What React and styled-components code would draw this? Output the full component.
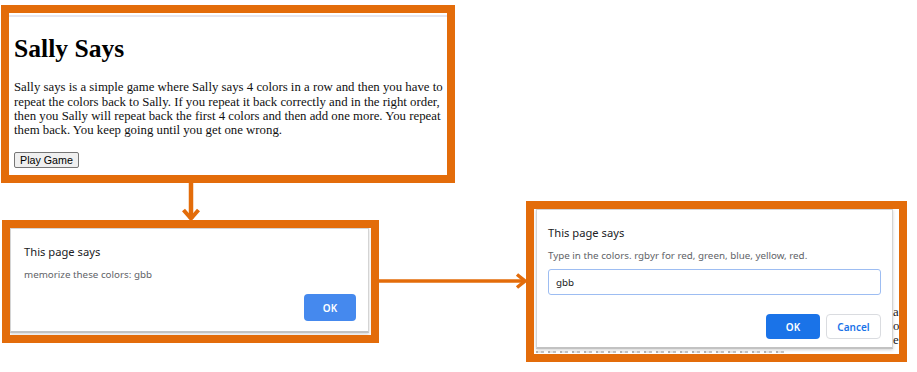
import React from 'react';
import styled, { createGlobalStyle } from 'styled-components';

const ORANGE = '#e36c0a';
const UI_FONT = '"Noto Sans", "Open Sans", "Liberation Sans", sans-serif';
const SERIF = '"Liberation Serif", "Times New Roman", serif';

const Global = createGlobalStyle`
  html, body { margin: 0; padding: 0; background: #fff; }
  #root { width: 917px; height: 372px; }
`;

const Page = styled.div`
  width: 917px;
  height: 372px;
  overflow: hidden;
  background: #fff;
  display: flex;
  flex-direction: column;
`;

const TopRow = styled.div`
  display: flex;
  padding: 5px 0 0 1px;
`;

const BottomRow = styled.div`
  display: flex;
  align-items: flex-start;
`;

const LeftColumn = styled.div`
  display: flex;
  flex-direction: column;
  align-items: center;
  margin-left: 2px;
  width: 377px;
  flex-shrink: 0;
`;

const Frame = styled.div`
  box-sizing: border-box;
  width: ${(p) => p.$w}px;
  height: ${(p) => p.$h}px;
  margin-top: ${(p) => p.$top || 0}px;
  border: 8px solid ${ORANGE};
  background: #fff;
  overflow: hidden;
  display: flex;
  flex-direction: column;
  flex-shrink: 0;
`;

/* ---------- box 1 : the web page ---------- */
const WebPage = styled.div`
  flex: 1;
  display: flex;
  flex-direction: column;
  padding-top: 2px;
`;

const TabLine = styled.div`
  height: 2px;
  background: #e6e6ee;
`;

const Heading = styled.h1`
  margin: 17px 0 0 5px;
  font: bold 25.6px/29.4px ${SERIF};
  color: #000;
`;

const Paragraph = styled.p`
  margin: 17px 0 0 5px;
  font: 12.8px/14.2px ${SERIF};
  color: #111;
  white-space: nowrap;
`;

const PlayButton = styled.button`
  align-self: flex-start;
  margin: 15px 0 0 5px;
  height: 16px;
  padding: 0 5px;
  font: 10.7px/14px "Liberation Sans", Arial, sans-serif;
  color: #000;
  background: #efefef;
  border: 1px solid #767676;
  border-radius: 2px;
`;

/* ---------- dialogs ---------- */
const DialogArea = styled.div`
  flex: 1;
  display: flex;
  flex-direction: column;
  overflow: hidden;
`;

const DialogRow = styled.div`
  display: flex;
  align-items: flex-start;
`;

const Dialog = styled.div`
  box-sizing: border-box;
  width: ${(p) => p.$w}px;
  height: ${(p) => p.$h}px;
  flex-shrink: 0;
  background: #fff;
  border: 1px solid #d4d4d4;
  border-bottom: 2px solid #c2c2c2;
  box-shadow: 0 1px 3px rgba(0, 0, 0, 0.18);
  padding: ${(p) => p.$pad};
  display: flex;
  flex-direction: column;
`;

const DialogTitle = styled.div`
  font: 11.2px/16px ${UI_FONT};
  color: #202124;
`;

const DialogMessage = styled.div`
  margin-top: 8px;
  font: 9.8px/14px ${UI_FONT};
  color: #5f6368;
  white-space: nowrap;
`;

const PromptInput = styled.input`
  box-sizing: border-box;
  margin-top: 6px;
  width: 333px;
  height: 26px;
  padding: 0 7px;
  font: 9.8px ${UI_FONT};
  color: #202124;
  background: #fff;
  border: 1px solid #9dbdf2;
  border-radius: 3px;
  outline: none;
`;

const ButtonRow = styled.div`
  margin-top: ${(p) => p.$top}px;
  display: flex;
  justify-content: flex-end;
  gap: 6px;
`;

const DialogButton = styled.button`
  box-sizing: border-box;
  width: ${(p) => p.$w}px;
  height: ${(p) => p.$h}px;
  padding: 0;
  border-radius: 4px;
  font: 600 10px ${UI_FONT};
  background: ${(p) => (p.$variant === 'cancel' ? '#fff' : p.$variant === 'old' ? '#4589ee' : '#1a73e8')};
  color: ${(p) => (p.$variant === 'cancel' ? '#1a73e8' : '#fff')};
  border: 1px solid ${(p) => (p.$variant === 'cancel' ? '#dadce0' : 'transparent')};
`;

const SideStrip = styled.div`
  width: ${(p) => p.$w}px;
  flex-shrink: 0;
  overflow: hidden;
  padding-top: ${(p) => p.$top || 0}px;
  font: 12.8px/14px ${SERIF};
  color: #222;
`;

/* speckled remains of the page text peeking below the prompt */
const BottomStrip = styled.div`
  height: 2px;
  margin: 2px 0 0 2px;
  width: 250px;
  background: repeating-linear-gradient(
    90deg,
    #666 0 2px,
    #ccc 2px 5px,
    #888 5px 8px,
    transparent 8px 12px
  );
  opacity: 0.5;
`;

/* ---------- connectors ---------- */
const DownArrow = () => (
  <svg width="20" height="37" viewBox="0 0 20 37" style={{ display: 'block' }}>
    <line x1="10" y1="0" x2="10" y2="36" stroke={ORANGE} strokeWidth="4.5" />
    <polyline points="2.5,27 10,35.5 17.5,27" fill="none" stroke={ORANGE} strokeWidth="4" />
  </svg>
);

const ArrowSvg = styled.svg`
  display: block;
  flex-shrink: 0;
  margin-top: 90px;
`;

const RightArrow = () => (
  <ArrowSvg width="147" height="16" viewBox="0 0 147 16">
    <line x1="0" y1="8" x2="146" y2="8" stroke={ORANGE} strokeWidth="3.5" />
    <polyline points="138,1.5 146,8 138,14.5" fill="none" stroke={ORANGE} strokeWidth="3.5" />
  </ArrowSvg>
);

export default function App() {
  return (
    <>
      <Global />
      <Page>
        <TopRow>
          <Frame $w={454} $h={178}>
            <WebPage>
              <TabLine />
              <Heading>Sally Says</Heading>
              <Paragraph>
                Sally says is a simple game where Sally says 4 colors in a row and then you have to
                <br />
                repeat the colors back to Sally. If you repeat it back correctly and in the right order,
                <br />
                then you Sally will repeat back the first 4 colors and then add one more. You repeat
                <br />
                them back. You keep going until you get one wrong.
              </Paragraph>
              <PlayButton>Play Game</PlayButton>
            </WebPage>
          </Frame>
        </TopRow>
        <BottomRow>
          <LeftColumn>
            <DownArrow />
            <Frame $w={377} $h={123}>
              <DialogArea>
                <Dialog $w={359} $h={105} $pad="15px 12px 0 13px">
                  <DialogTitle>This page says</DialogTitle>
                  <DialogMessage>memorize these colors: gbb</DialogMessage>
                  <ButtonRow $top={12}>
                    <DialogButton $variant="old" $w={52} $h={27}>OK</DialogButton>
                  </ButtonRow>
                </Dialog>
              </DialogArea>
            </Frame>
          </LeftColumn>
          <RightArrow />
          <Frame $w={381} $h={161} $top={18}>
            <DialogArea>
              <DialogRow>
                <SideStrip $w={2} />
                <Dialog $w={357} $h={140} $pad="15px 11px 0 11px">
                  <DialogTitle>This page says</DialogTitle>
                  <DialogMessage>Type in the colors. rgbyr for red, green, blue, yellow, red.</DialogMessage>
                  <PromptInput defaultValue="gbb" readOnly />
                  <ButtonRow $top={19}>
                    <DialogButton $w={54} $h={25}>OK</DialogButton>
                    <DialogButton $variant="cancel" $w={55} $h={25}>Cancel</DialogButton>
                  </ButtonRow>
                </Dialog>
                <SideStrip $w={6} $top={96}>
                  a<br />o<br />e
                </SideStrip>
              </DialogRow>
              <BottomStrip />
            </DialogArea>
          </Frame>
        </BottomRow>
      </Page>
    </>
  );
}
